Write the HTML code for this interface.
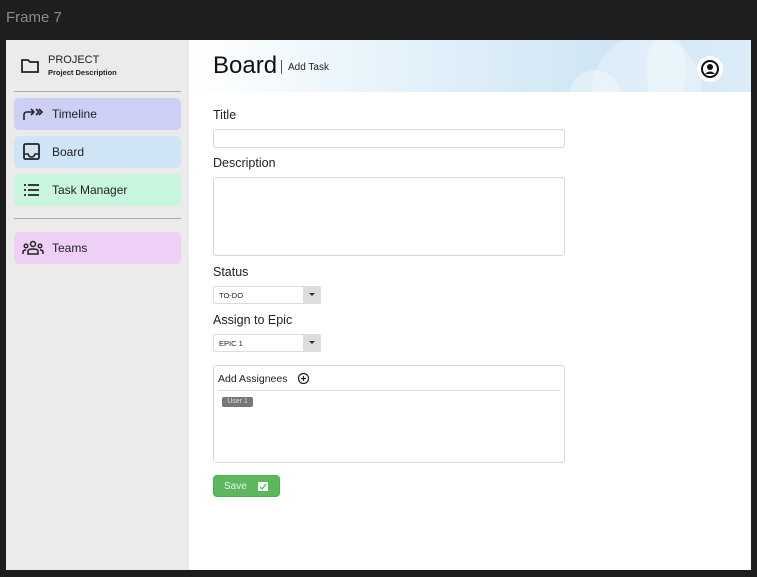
<!DOCTYPE html><html><head><style>
*{margin:0;padding:0;box-sizing:border-box}
body{width:757px;height:577px;background:#1e1e1e;font-family:"Liberation Sans",sans-serif;position:relative;overflow:hidden}
.a{position:absolute}
.nav{position:absolute;left:14px;width:167px;height:32px;border-radius:5px;font-size:12px;color:#222}
.nav span{position:absolute;left:38px;top:9px}
.nav svg{position:absolute;left:8px;top:7px}
.lbl{position:absolute;left:213px;font-size:12.5px;color:#222}
.box{position:absolute;left:213px;width:352px;border:1px solid #d6d6d6;border-radius:3px;background:#fff}
.sel{position:absolute;left:213px;width:108px;height:18px;border:1px solid #ddd;border-radius:2px;font-size:7.5px;color:#222;background:#fff}
.sel span{position:absolute;left:5px;top:4px}
.sel i{position:absolute;right:0;top:0;width:17px;height:16px;background:#ddd}
.sel i:after{content:"";position:absolute;left:6px;top:6px;border:3px solid transparent;border-top:3px solid #333}
</style></head><body>
<div class="a" style="left:6px;top:9px;color:#8a8a8a;font-size:15px">Frame 7</div>
<div class="a" style="left:6px;top:40px;width:745px;height:530px;background:#fff"></div>
<div class="a" style="left:6px;top:40px;width:183px;height:530px;background:#ebebeb"></div>
<svg class="a" style="left:20px;top:57px" width="20" height="18" viewBox="0 0 20 18"><path d="M2 3h6l2 2h8v10H2z" fill="none" stroke="#222" stroke-width="1.8"/></svg>
<div class="a" style="left:48px;top:54px;font-size:11px;color:#222">PROJECT</div>
<div class="a" style="left:48px;top:68px;font-size:7.5px;color:#222;font-weight:bold">Project Description</div>
<div class="a" style="left:14px;top:91px;width:167px;height:1px;background:#aaa"></div>
<div class="nav" style="top:98px;background:#cdcff5"><svg width="22" height="18" viewBox="0 0 22 18"><path d="M2 15V10Q2 7 5 7H12M9 4l3 3-3 3M14 4l3 3-3 3M17 4l3 3-3 3" fill="none" stroke="#222" stroke-width="1.6"/></svg><span>Timeline</span></div>
<div class="nav" style="top:136px;background:#cfe5f5"><svg width="20" height="18" viewBox="0 0 20 18"><rect x="2" y="1" width="15" height="15" rx="1.5" fill="none" stroke="#222" stroke-width="1.8"/><path d="M2 11h4q1 3 3.5 3T13 11h4" fill="none" stroke="#222" stroke-width="1.6"/></svg><span>Board</span></div>
<div class="nav" style="top:174px;background:#c8f5de"><svg width="20" height="18" viewBox="0 0 20 18"><path d="M2 4h2M2 9h2M2 14h2M6 4h11M6 9h11M6 14h11" stroke="#222" stroke-width="1.8"/></svg><span>Task Manager</span></div>
<div class="a" style="left:14px;top:218px;width:167px;height:1px;background:#aaa"></div>
<div class="nav" style="top:232px;background:#eecff5"><svg width="22" height="18" viewBox="0 0 22 18"><circle cx="11" cy="5" r="2.5" fill="none" stroke="#222" stroke-width="1.5"/><circle cx="4" cy="7" r="1.8" fill="none" stroke="#222" stroke-width="1.4"/><circle cx="18" cy="7" r="1.8" fill="none" stroke="#222" stroke-width="1.4"/><path d="M6 15v-3q0-2 5-2t5 2v3zM1 15v-2q0-2 3-2M21 15v-2q0-2-3-2" fill="none" stroke="#222" stroke-width="1.5"/></svg><span>Teams</span></div>
<div class="a" style="left:190px;top:40px;width:561px;height:52px;background:linear-gradient(90deg,#fff 0%,#e3f1fa 40%,#cfe5f5 75%,#dcedf8 100%);overflow:hidden">
<div class="a" style="left:402px;top:-5px;width:110px;height:110px;border-radius:50%;background:rgba(255,255,255,.3)"></div>
<div class="a" style="left:380px;top:30px;width:50px;height:50px;border-radius:50%;background:rgba(255,255,255,.35)"></div>
<div class="a" style="left:456px;top:-10px;width:40px;height:80px;border-radius:50%;background:rgba(255,255,255,.3)"></div>
</div>
<div class="a" style="left:213px;top:52px;font-size:24px;color:#111">Board</div>
<div class="a" style="left:281px;top:60px;width:1px;height:14px;background:#555"></div>
<div class="a" style="left:288px;top:62px;font-size:10px;color:#222">Add Task</div>
<div class="a" style="left:697px;top:56px;width:26px;height:26px;border-radius:50%;background:#fff"></div>
<svg class="a" style="left:700px;top:59px" width="20" height="20" viewBox="0 0 20 20"><circle cx="10" cy="10" r="8" fill="none" stroke="#111" stroke-width="2"/><circle cx="10" cy="8" r="3" fill="#111"/><path d="M5 15q5-5 10 0" fill="#111"/></svg>
<div class="lbl" style="top:108px">Title</div>
<div class="box" style="top:129px;height:19px"></div>
<div class="lbl" style="top:156px">Description</div>
<div class="box" style="top:177px;height:79px"></div>
<div class="lbl" style="top:265px">Status</div>
<div class="sel" style="top:286px"><span>TO-DO</span><i></i></div>
<div class="lbl" style="top:313px">Assign to Epic</div>
<div class="sel" style="top:334px"><span>EPIC 1</span><i></i></div>
<div class="box" style="top:365px;height:98px"></div>
<div class="a" style="left:218px;top:373px;font-size:10.5px;color:#222">Add Assignees</div>
<svg class="a" style="left:297px;top:372px" width="13" height="13" viewBox="0 0 13 13"><circle cx="6.5" cy="6.5" r="5" fill="none" stroke="#222" stroke-width="1.2"/><path d="M6.5 4v5M4 6.5h5" stroke="#222" stroke-width="1.2"/></svg>
<div class="a" style="left:218px;top:390px;width:342px;height:1px;background:#ddd"></div>
<div class="a" style="left:222px;top:397px;width:31px;height:10px;background:#777;border-radius:2px;color:#ddd;font-size:7px;line-height:10px;text-align:center">User 1</div>
<div class="a" style="left:213px;top:475px;width:67px;height:22px;background:#5cb85c;border-radius:4px;border:1px solid #4cae4c"></div>
<div class="a" style="left:224px;top:481px;font-size:10px;color:#e8f5e8">Save</div>
<div class="a" style="left:258px;top:482px;width:10px;height:9px;background:#fff;border-radius:1px"></div>
<svg class="a" style="left:259px;top:483px" width="8" height="7"><path d="M1 4l2 2 4-5" fill="none" stroke="#5cb85c" stroke-width="1.3"/></svg>
</body></html>
